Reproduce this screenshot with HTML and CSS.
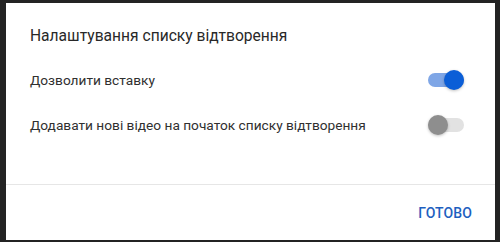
FILE: index.html
```html
<!DOCTYPE html>
<html lang="uk">
<head>
<meta charset="utf-8">
<link rel="stylesheet" href="styles.css">
</head>
<body>
<div class="dialog">
  <div class="content">
    <div class="title">Налаштування списку відтворення</div>
    <div class="row">
      <span class="label">Дозволити вставку</span>
      <span class="toggle on"><span class="track"></span><span class="knob"></span></span>
    </div>
    <div class="row">
      <span class="label">Додавати нові відео на початок списку відтворення</span>
      <span class="toggle"><span class="track"></span><span class="knob"></span></span>
    </div>
  </div>
  <div class="footer">
    <button class="done">Готово</button>
  </div>
</div>
</body>
</html>
```
FILE: styles.css
```css
html, body {
  margin: 0;
  padding: 0;
  background: #232323;
  width: 500px;
  height: 242px;
  overflow: hidden;
}
body {
  padding: 3px 5px 2px 6px;
  box-sizing: border-box;
  font-family: Roboto, "Noto Sans", sans-serif;
}
.dialog {
  background: #fff;
  height: 237px;
  display: flex;
  flex-direction: column;
}
.content {
  height: 182px;
  padding: 21px 31px 0 24px;
  box-sizing: border-box;
  border-bottom: 1px solid #e6e6e6;
}
.title {
  font-size: 15.6px;
  line-height: 24px;
  color: #282828;
  margin-bottom: 9px;
}
.row {
  height: 45px;
  display: flex;
  align-items: center;
  justify-content: space-between;
}
.label {
  font-size: 13.7px;
  color: #303030;
}
.toggle {
  position: relative;
  width: 36px;
  height: 20px;
}
.track {
  position: absolute;
  left: 0;
  top: 3px;
  width: 36px;
  height: 14px;
  border-radius: 7px;
  background: #e2e2e2;
}
.knob {
  position: absolute;
  left: 0;
  top: 0;
  width: 20px;
  height: 20px;
  border-radius: 50%;
  background: #8e8e8e;
  box-shadow: 0 1px 3px rgba(0,0,0,0.25);
}
.toggle.on .track {
  background: #7fa6e6;
}
.toggle.on .knob {
  left: 16px;
  background: #0b5ed7;
}
.footer {
  flex: 1;
  display: flex;
  align-items: center;
  justify-content: flex-end;
  padding-right: 15px;
}
.done {
  font-family: Roboto, "Noto Sans", sans-serif;
  font-size: 14px;
  font-weight: 500;
  text-transform: uppercase;
  color: #1e5fbf;
  background: none;
  border: none;
  padding: 8px;
  letter-spacing: 0.1px;
}
```
